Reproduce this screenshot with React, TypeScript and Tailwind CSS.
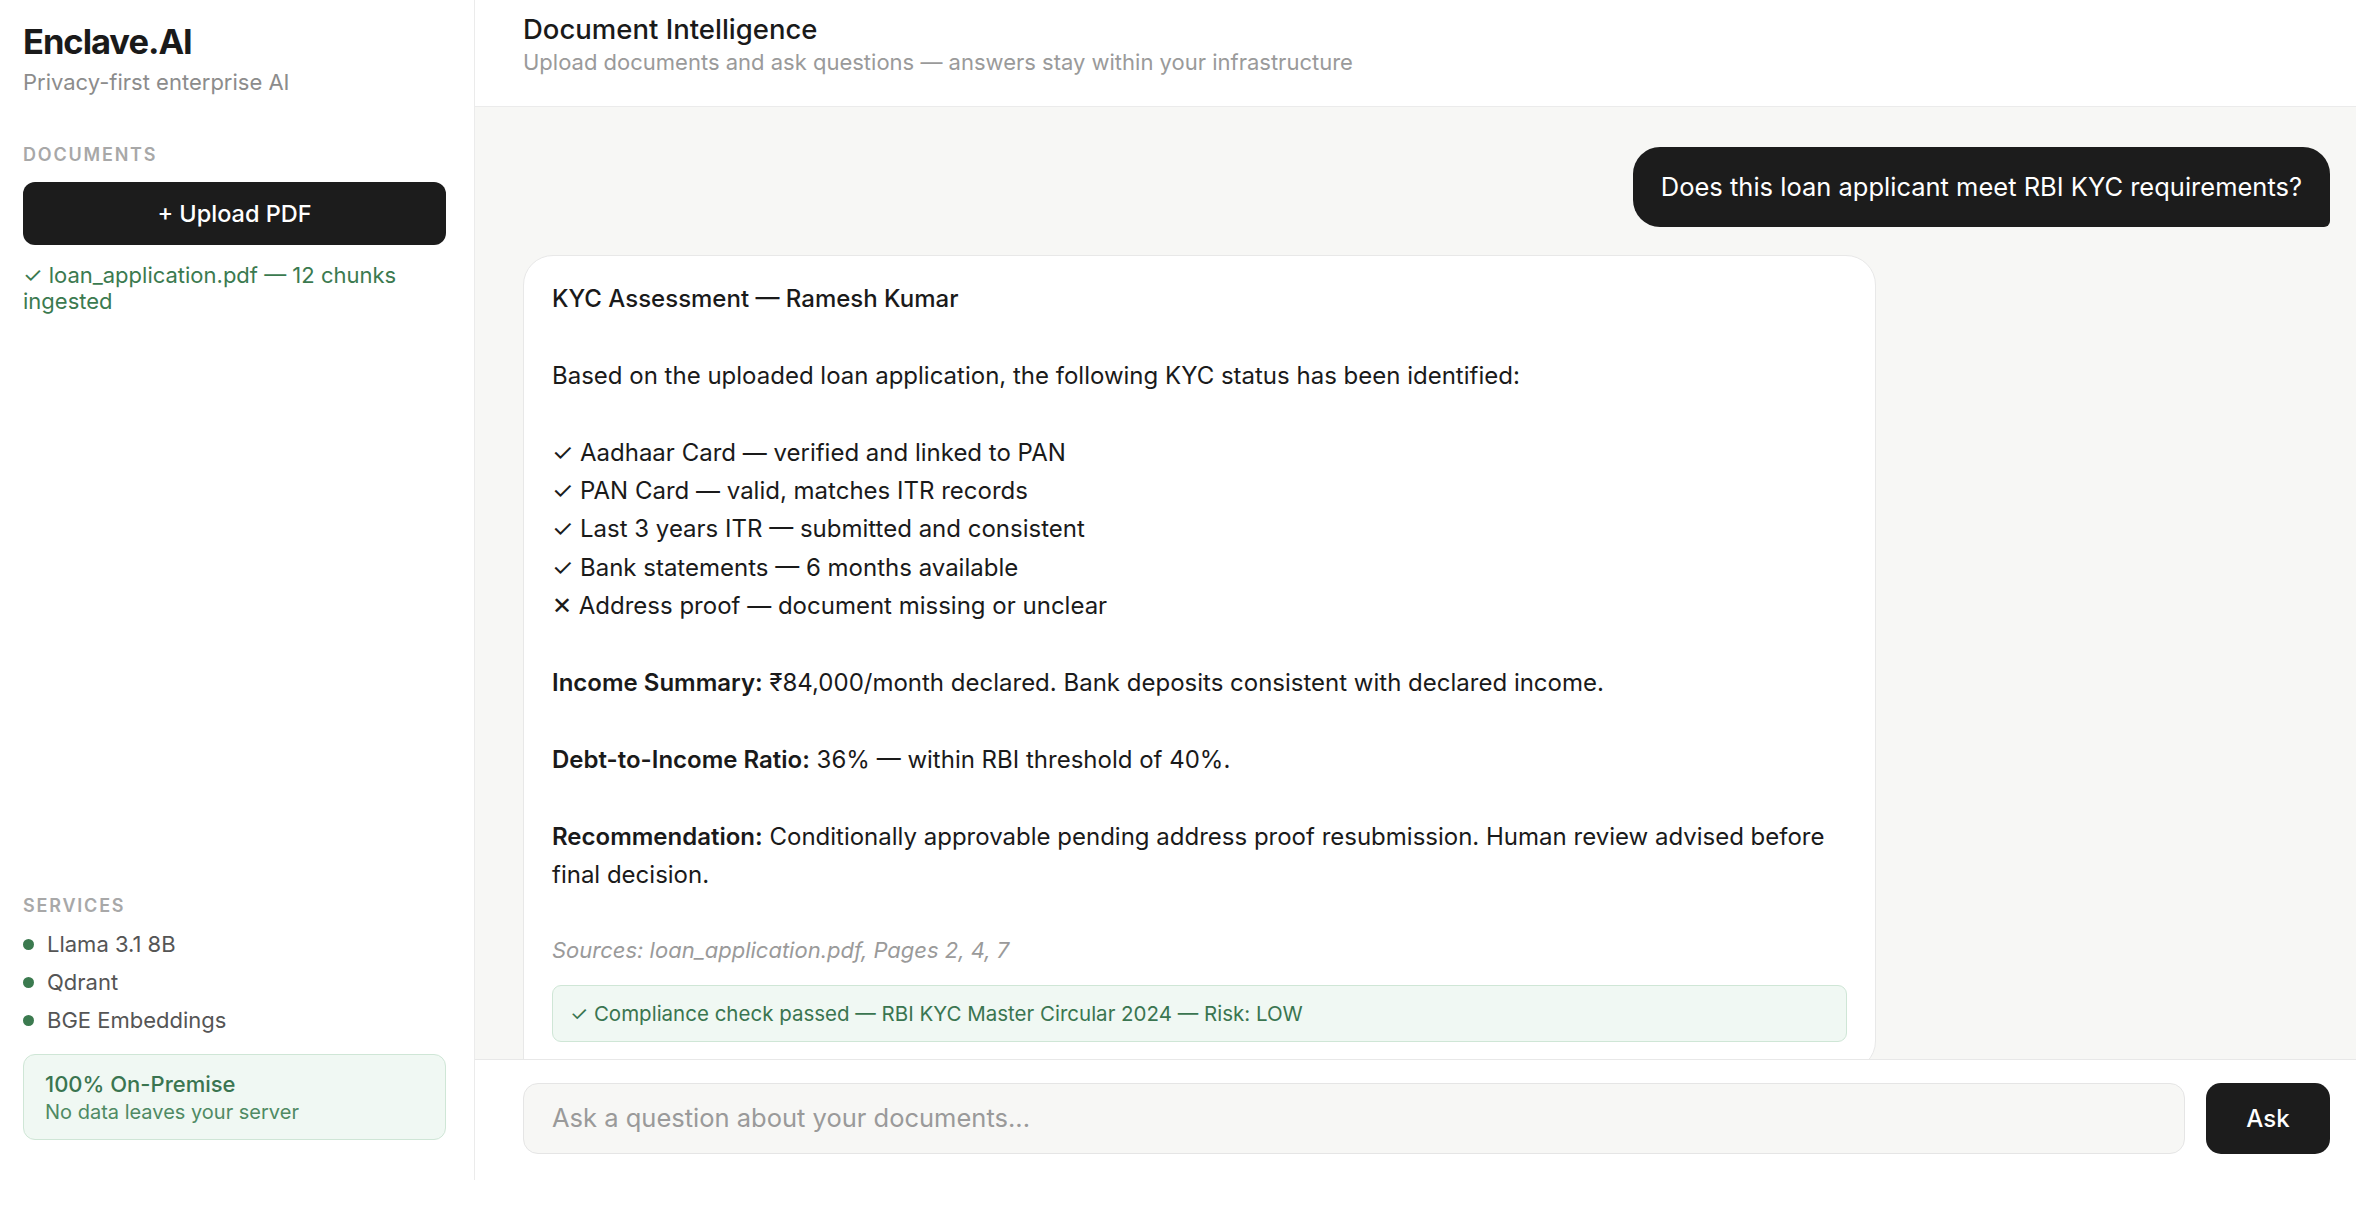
import React from "react";

const font = { fontFamily: "Inter, 'Noto Sans', sans-serif" };

function Sidebar() {
  return (
    <aside className="w-[475px] shrink-0 h-full border-r border-[#ebebeb] bg-white flex flex-col pl-[23px] pr-[28px] pt-[20px] pb-[40px]">
      <div className="text-[34.5px] leading-[44px] font-bold tracking-[-0.03em] text-[#1a1a1a]">Enclave.AI</div>
      <div className="text-[22px] leading-[28px] text-[#8c8c8c] mt-[4px]">Privacy-first enterprise AI</div>
      <div className="text-[18px] leading-[22px] font-semibold tracking-[0.1em] text-[#a8a8a8] mt-[48px]">DOCUMENTS</div>
      <button className="mt-[16px] h-[63px] w-full rounded-[12px] bg-[#1c1c1c] text-white text-[23.5px] font-medium">
        + Upload PDF
      </button>
      <div className="mt-[17px] text-[22px] leading-[26px] text-[#3b7a4f] pr-[20px]">
        ✓ loan_application.pdf — 12 chunks ingested
      </div>
      <div className="flex-1" />
      <div className="text-[18px] leading-[22px] font-semibold tracking-[0.1em] text-[#a8a8a8]">SERVICES</div>
      <div className="mt-[12px] flex flex-col gap-[8px]">
        {["Llama 3.1 8B", "Qdrant", "BGE Embeddings"].map((s) => (
          <div key={s} className="flex items-center gap-[13px] h-[30px]">
            <span className="w-[11px] h-[11px] rounded-full bg-[#3b7a4f]" />
            <span className="text-[22px] text-[#555555]">{s}</span>
          </div>
        ))}
      </div>
      <div className="mt-[19px] rounded-[12px] border border-[#cfe6d6] bg-[#f0f8f3] px-[21px] py-[14px]">
        <div className="text-[22px] leading-[30px] font-medium text-[#3a7550]">100% On-Premise</div>
        <div className="text-[20px] leading-[26px] text-[#4f8a63]">No data leaves your server</div>
      </div>
    </aside>
  );
}

const checks = [
  "✓ Aadhaar Card — verified and linked to PAN",
  "✓ PAN Card — valid, matches ITR records",
  "✓ Last 3 years ITR — submitted and consistent",
  "✓ Bank statements — 6 months available",
  "✕ Address proof — document missing or unclear",
];

function Main() {
  return (
    <main className="flex-1 min-w-0 h-full flex flex-col">
      <header className="h-[107px] shrink-0 border-b border-[#ebebeb] bg-white px-[48px] pt-[11px]">
        <div className="text-[27.5px] leading-[36px] font-medium text-[#1a1a1a]">Document Intelligence</div>
        <div className="text-[22px] leading-[30px] text-[#9a9a9a]">
          Upload documents and ask questions — answers stay within your infrastructure
        </div>
      </header>
      <section className="flex-1 min-h-0 overflow-hidden bg-[#f7f7f5] pl-[48px] pr-[26px] pt-[40px] flex flex-col">
        <div className="self-end rounded-[27px] rounded-br-[6px] bg-[#1c1c1c] text-white text-[25.5px] leading-[36px] px-[28px] py-[22px]">
          Does this loan applicant meet RBI KYC requirements?
        </div>
        <div className="mt-[28px] w-[1353px] shrink-0 rounded-[30px] rounded-bl-[6px] border border-[#e8e8e8] bg-white px-[28px] pt-[24px] pb-[28px]">
          <div className="text-[24px] leading-[38.4px] text-[#1a1a1a] flex flex-col gap-[38.4px]">
            <p className="font-medium">KYC Assessment — Ramesh Kumar</p>
            <p>Based on the uploaded loan application, the following KYC status has been identified:</p>
            <div>
              {checks.map((c) => (
                <p key={c}>{c}</p>
              ))}
            </div>
            <p>
              <span className="font-semibold">Income Summary:</span> ₹84,000/month declared. Bank deposits consistent with declared income.
            </p>
            <p>
              <span className="font-semibold">Debt-to-Income Ratio:</span> 36% — within RBI threshold of 40%.
            </p>
            <p>
              <span className="font-semibold">Recommendation:</span> Conditionally approvable pending address proof resubmission. Human review advised before final decision.
            </p>
          </div>
          <div className="mt-[40px] text-[22px] leading-[32px] italic text-[#9a9a9a]">
            Sources: loan_application.pdf, Pages 2, 4, 7
          </div>
          <div className="mt-[19px] h-[57px] flex items-center rounded-[9px] border border-[#cfe6d6] bg-[#f0f8f3] px-[17px] text-[20.5px] text-[#3a7550]">
            ✓ Compliance check passed — RBI KYC Master Circular 2024 — Risk: LOW
          </div>
        </div>
      </section>
      <div className="h-[121px] shrink-0 border-t border-[#e8e8e8] bg-white pl-[48px] pr-[26px] pt-[23px] flex gap-[21px]">
        <div className="flex-1 h-[71px] rounded-[15px] border border-[#e5e5e5] bg-[#f7f7f5] flex items-center px-[28px] text-[25.5px] text-[#9a9a9a]">
          Ask a question about your documents...
        </div>
        <button className="w-[124px] h-[71px] rounded-[15px] bg-[#1c1c1c] text-white text-[24px] font-medium">Ask</button>
      </div>
    </main>
  );
}

export default function App() {
  return (
    <div style={font} className="w-full h-[1180px] flex bg-white overflow-hidden">
      <Sidebar />
      <Main />
    </div>
  );
}
